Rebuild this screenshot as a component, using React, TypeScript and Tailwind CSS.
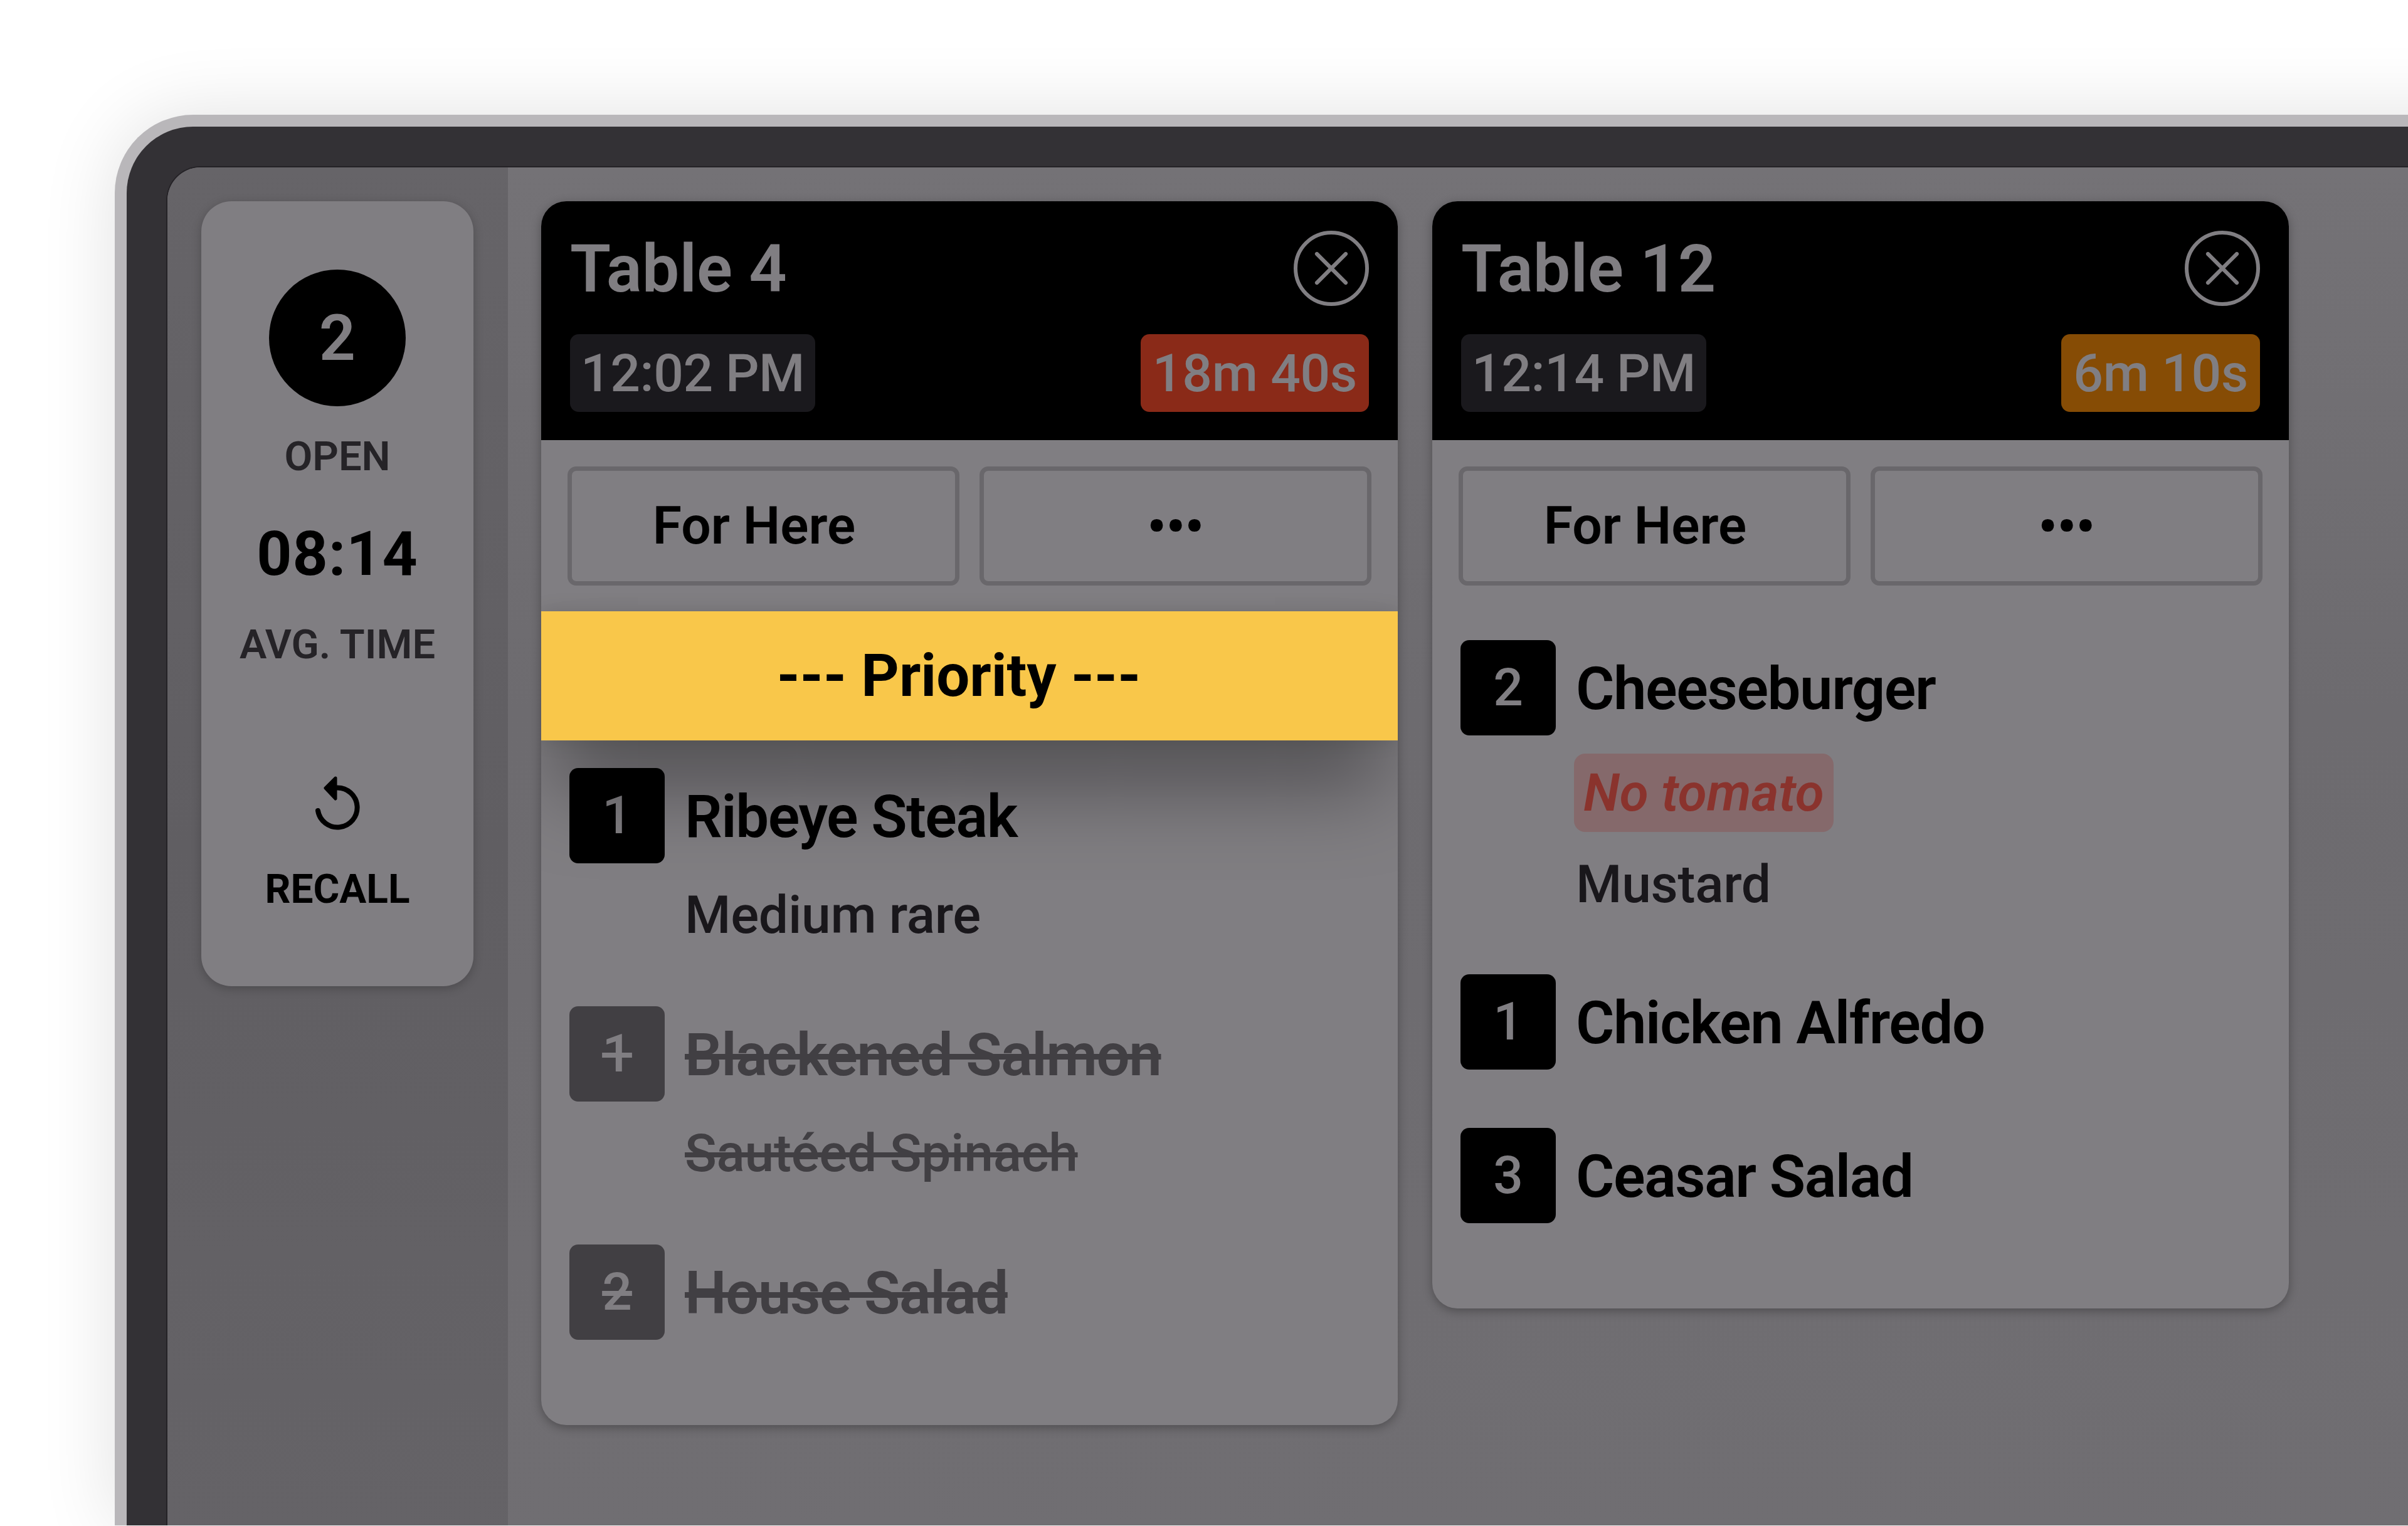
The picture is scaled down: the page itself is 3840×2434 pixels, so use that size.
import { X } from 'lucide-react';

const ROBOTO = 'font-[Roboto,sans-serif]';

function ReplayIcon() {
  return (
    <svg width="100" height="110" viewBox="-2 0 100 110" fill="none">
      <path d="M47 28.5A31.5 31.5 0 1 1 17 65" stroke="#000" strokeWidth="8" strokeLinecap="round" />
      <path d="M45 13 29 29l16 17z" fill="#000" stroke="#000" strokeWidth="5" strokeLinejoin="round" />
    </svg>
  );
}

function TicketHeader({ table, placed, elapsed, elapsedBg }: { table: string; placed: string; elapsed: string; elapsedBg: string }) {
  return (
    <div className="flex h-[381px] flex-col justify-between bg-black px-[46px] pb-[45px] pt-[46px] text-[#807e82]">
      <div className="flex items-center justify-between">
        <span className="pt-[2px] text-[106px] font-semibold leading-[120px]">{table}</span>
        <div className="flex size-[120px] items-center justify-center rounded-full border-[6px] border-[#807e82]">
          <X size={92} strokeWidth={1.6} />
        </div>
      </div>
      <div className="flex items-center justify-between">
        <span className="flex h-[124px] items-center rounded-[14px] bg-[#1a191d] px-[17px] pt-[2px] text-[84px] font-medium tracking-[-0.5px]">{placed}</span>
        <span className={`flex h-[124px] items-center rounded-[14px] px-[19px] pt-[2px] text-[84px] font-medium tracking-[-0.3px] ${elapsedBg}`}>{elapsed}</span>
      </div>
    </div>
  );
}

function ActionRow() {
  return (
    <div className="grid grid-cols-2 gap-[32px] px-[42px] pt-[42px]">
      <button className="flex h-[190px] items-center justify-center rounded-[14px] border-[7px] border-[#69676b] pr-[30px] text-[84px] font-semibold text-black">For Here</button>
      <button className="flex h-[190px] items-center justify-center rounded-[14px] border-[7px] border-[#69676b] pt-[4px] text-[84px] font-bold text-black">•••</button>
    </div>
  );
}

function Item({ qty, name, done, children }: { qty: number; name: string; done?: boolean; children?: React.ReactNode }) {
  return (
    <div className="flex gap-[32px]">
      <div
        className={
          done
            ? 'flex h-[152px] w-[152px] shrink-0 items-center justify-center rounded-[14px] bg-[#413f43] text-[84px] font-medium text-[#807e82] line-through'
            : 'flex h-[152px] w-[152px] shrink-0 items-center justify-center rounded-[14px] bg-black text-[84px] font-medium text-[#807e82]'
        }
      >
        {qty}
      </div>
      <div className="flex flex-col">
        <div className={done ? 'flex h-[152px] items-center pt-[5px] text-[94px] font-semibold tracking-[-1.4px] text-[#413f43] line-through' : 'flex h-[152px] items-center pt-[5px] text-[94px] font-semibold tracking-[-1.4px] text-black'}>
          {name}
        </div>
        {children}
      </div>
    </div>
  );
}

export default function App() {
  return (
    <div className={`h-[2434px] w-[3840px] overflow-hidden bg-white pl-[183px] pt-[183px] ${ROBOTO}`}>
      <div className="h-[2250px] w-[3800px] rounded-tl-[125px] border-l-[19px] border-t-[19px] border-[#b9b7ba] bg-[#333135] pl-[63px] pt-[63px] shadow-[0_0_120px_rgba(0,0,0,0.12)]">
        <div className="flex h-full overflow-hidden rounded-tl-[55px] border-l-2 border-t-2 border-[#242226] bg-gradient-to-b from-[#747276] via-[#6d6b6f] via-40% to-[#706e72]">
          <aside className="h-full w-[543px] shrink-0 bg-gradient-to-b from-[#666468] via-[#605e62] to-[#656367] pl-[54px] pt-[54px]">
            <div className="flex h-[1252px] w-[434px] flex-col items-center rounded-[48px] bg-[#807e82] pt-[109px] shadow-[0_4px_16px_rgba(0,0,0,0.22)]">
              <div className="flex size-[218px] items-center justify-center rounded-full bg-black text-[102px] font-semibold text-[#807e82]">2</div>
              <div className="mt-[32px] text-[65px] font-semibold text-[#252327]">OPEN</div>
              <div className="mt-[32px] text-[98px] font-bold tracking-[1px] text-black">08:14</div>
              <div className="mt-[23px] text-[65px] font-semibold text-[#252327]">AVG. TIME</div>
              <div className="mt-[151px]">
                <ReplayIcon />
              </div>
              <div className="mt-[33px] text-[64px] font-bold text-black">RECALL</div>
            </div>
          </aside>
          <main className="flex items-start gap-[55px] pl-[53px] pt-[54px]">
            <section className="h-[1952px] w-[1366px] shrink-0 overflow-hidden rounded-[40px] bg-[#807e82] shadow-[0_4px_16px_rgba(0,0,0,0.3)]">
              <TicketHeader table="Table 4" placed="12:02 PM" elapsed="18m 40s" elapsedBg="bg-[#8a2a18]" />
              <ActionRow />
              <div className="relative mt-[41px] flex h-[206px] items-center justify-center bg-[#f9c74a] pr-[34px] text-[94px] font-bold text-black shadow-[0_100px_130px_-20px_rgba(0,0,0,0.35),0_0_30px_rgba(0,0,0,0.12)]">--- Priority ---</div>
              <div className="flex flex-col gap-[95px] pl-[45px] pt-[44px]">
                <Item qty={1} name="Ribeye Steak">
                  <div className="mt-[33px] text-[84px] font-medium leading-[100px] tracking-[-0.3px] text-[#19171b]">Medium rare</div>
                </Item>
                <Item qty={1} name="Blackened Salmon" done>
                  <div className="mt-[33px] text-[84px] font-medium leading-[100px] tracking-[-0.3px] text-[#413f43] line-through">Sautéed Spinach</div>
                </Item>
                <Item qty={2} name="House Salad" done />
              </div>
            </section>
            <section className="h-[1766px] w-[1366px] shrink-0 overflow-hidden rounded-[40px] bg-[#807e82] shadow-[0_4px_16px_rgba(0,0,0,0.3)]">
              <TicketHeader table="Table 12" placed="12:14 PM" elapsed="6m 10s" elapsedBg="bg-[#864c05]" />
              <ActionRow />
              <div className="flex flex-col gap-[93px] pl-[45px] pt-[87px]">
                <Item qty={2} name="Cheeseburger">
                  <span className="-ml-[3px] mt-[29px] flex h-[125px] w-fit items-center rounded-[18px] bg-[#85696b] px-[15px] text-[84px] font-semibold italic text-[#8a332d]">No tomato</span>
                  <div className="mt-[34px] text-[84px] font-medium leading-[100px] tracking-[-0.3px] text-[#19171b]">Mustard</div>
                </Item>
                <Item qty={1} name="Chicken Alfredo" />
                <Item qty={3} name="Ceasar Salad" />
              </div>
            </section>
          </main>
        </div>
      </div>
    </div>
  );
}
